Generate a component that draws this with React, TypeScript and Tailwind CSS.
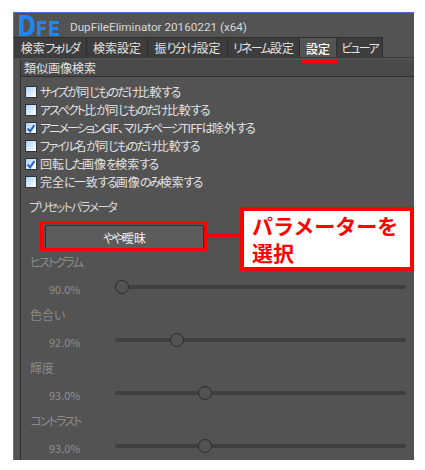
const TABS = [
  { label: "検索フォルダ", w: "w-[73px]" },
  { label: "検索設定", w: "w-[61px]" },
  { label: "振り分け設定", w: "w-[80px]" },
  { label: "リネーム設定", w: "w-[72px]" },
  { label: "設定", w: "w-[37px]", active: true },
  { label: "ビューア", w: "w-[46px]" },
];

const CHECKS = [
  { label: "サイズが同じものだけ比較する" },
  { label: "アスペクト比が同じものだけ比較する" },
  { label: "アニメーションGIF、マルチページTIFFは除外する", checked: true },
  { label: "ファイル名が同じものだけ比較する" },
  { label: "回転した画像を検索する", checked: true },
  { label: "完全に一致する画像のみ検索する" },
];

const SLIDERS = [
  { label: "ヒストグラム", value: "90.0%", thumb: "left-0" },
  { label: "色合い", value: "92.0%", thumb: "left-[55px]" },
  { label: "輝度", value: "93.0%", thumb: "left-[83px]" },
  { label: "コントラスト", value: "93.0%", thumb: "left-[83px]" },
];

// the original UI font has narrow kana, so tighten only the kana and latin runs
function Jp({ text }: { text: string }) {
  return (
    <>
      {text.split(/([\u3040-\u30ff]+|[A-Z、]+)/).map((part, i) => {
        if (/[\u3040-\u30ff]/.test(part)) {
          return (
            <span key={i} className="tracking-[-1.8px]">
              {part}
            </span>
          );
        }
        if (/[A-Z、]/.test(part)) {
          return (
            <span key={i} className="tracking-[-0.8px]">
              {part}
            </span>
          );
        }
        return part;
      })}
    </>
  );
}

function CheckRow({ label, checked }: { label: string; checked?: boolean }) {
  return (
    <div className="flex h-[18px] items-center">
      <div className="flex h-[12px] w-[12px] shrink-0 items-center justify-center border border-[#333] bg-gradient-to-br from-[#a9d3f5] to-white">
        {checked && (
          <svg viewBox="0 0 12 12" className="h-[11px] w-[11px]">
            <path d="M2 6 L5 9.5 L10 2" fill="none" stroke="#2b63c9" strokeWidth="2.4" />
          </svg>
        )}
      </div>
      <span className="ml-[3px] whitespace-nowrap text-[12px] text-[#e2e2e2]">
        <Jp text={label} />
      </span>
    </div>
  );
}

function SliderRow({ label, value, thumb }: { label: string; value: string; thumb: string }) {
  return (
    <div className="h-[53px]">
      <div className="h-[18px] pl-[9px] text-[12px] leading-[18px] text-[#8a8a8a]">
        <Jp text={label} />
      </div>
      <div className="mt-[6px] flex items-center">
        <span className="mt-[4px] w-[61px] pl-[28px] text-[11px] leading-[16px] text-[#8f8f8f]">{value}</span>
        <div className="relative ml-[33px] h-[14px] w-[291px]">
          <div className="absolute left-0 right-0 top-[5px] h-[4px] rounded-full bg-[#3f3f3f]" />
          <div className={`absolute top-0 h-[14px] w-[14px] rounded-full border border-[#2c2c2c] bg-[#535353] ${thumb}`} />
        </div>
      </div>
    </div>
  );
}

function Logo() {
  return (
    <svg viewBox="0 0 41 21" className="h-[21px] w-[41px]">
      <path fillRule="evenodd" fill="#1f86f2" d="M0 0 H7 C12.5 0 15.5 4 15.5 10.5 C15.5 17 12.5 21 7 21 H0 Z M4.5 4 V17 H6.5 C9.5 17 11 14.5 11 10.5 C11 6.5 9.5 4 6.5 4 Z" />
      <path fill="#1f86f2" d="M18 6 H27 V9 H21.5 V12 H26.5 V15 H21.5 V21 H18 Z" />
      <path fill="#1f86f2" d="M30 6 H40 V9 H33.5 V12 H39 V15 H33.5 V18 H40 V21 H30 Z" />
    </svg>
  );
}

export default function App() {
  return (
    <div
      className="relative h-[470px] w-[425px] overflow-hidden bg-white pb-[10px] pl-[13px] pr-[11px] pt-[12px] [font-feature-settings:'palt']"
      style={{ fontFamily: '"Noto Sans CJK JP", "Liberation Sans", sans-serif' }}
    >
      <div className="h-[448px] border-l border-t border-[#3f6fd8] bg-[#535353]">
        <div className="flex h-[24px] items-center pl-[5px]">
          <Logo />
          <span className="ml-[10px] mt-[5px] text-[11.7px] text-[#d8d8d8]" style={{ fontFamily: "Roboto, sans-serif" }}>
            DupFileEliminator 20160221 (x64)
          </span>
        </div>

        <div className="flex h-[21px] border-b border-[#3a3a3a]">
          {TABS.map((t) => (
            <div
              key={t.label}
              className={`flex shrink-0 items-center justify-center whitespace-nowrap border-r border-t border-[#2f2f2f] text-[12px] text-[#e2e2e2] ${t.w} ${
                t.active ? "bg-[#535353] pt-[3px] font-medium text-white" : "bg-[#3d3d3d]"
              }`}
            >
              <Jp text={t.label} />
            </div>
          ))}
        </div>

        <div className="ml-[6px] mt-[2px] h-[400px] border-l border-[#2f2f2f]">
          <div className="flex h-[17px] items-center border-b border-[#2f2f2f] bg-[#4a4a4a] pl-[3px] text-[12px] text-[#e2e2e2]">
            類似画像検索
          </div>
          <div className="pl-[4px] pt-[6px]">
            {CHECKS.map((c) => (
              <CheckRow key={c.label} label={c.label} checked={c.checked} />
            ))}
          </div>
          <div className="mt-[7px] pl-[8px] text-[12px] leading-[18px] text-[#d6d6d6]">
            <Jp text="プリセットパラメータ" />
          </div>
          <div className="ml-[24px] mt-[9px] flex h-[26px] w-[159px] items-center justify-center rounded-[2px] border border-[#2f2f2f] bg-[#5c5c5c] text-[12px] text-[#f0f0f0]">
            <Jp text="やや曖昧" />
          </div>
          <div className="mt-[2px]">
            {SLIDERS.map((s) => (
              <SliderRow key={s.label} {...s} />
            ))}
          </div>
        </div>
      </div>

      <div className="absolute left-[301px] top-[60px] h-[3px] w-[36px] bg-[#ff0000]" />
      <div className="absolute left-[40px] top-[221px] h-[30px] w-[167px] border-[3px] border-[#ff0000]" />
      <div className="absolute left-[206px] top-[234px] h-[3px] w-[36px] bg-[#ff0000]" />
      <div className="absolute left-[240px] top-[207px] h-[64px] w-[174px] whitespace-nowrap border-[4px] border-[#ff0000] bg-white pl-[8px] pt-[1px] text-[21px] font-bold leading-[27px] text-[#ff0000] [font-feature-settings:normal]">
        パラメーターを
        <br />
        選択
      </div>
    </div>
  );
}
